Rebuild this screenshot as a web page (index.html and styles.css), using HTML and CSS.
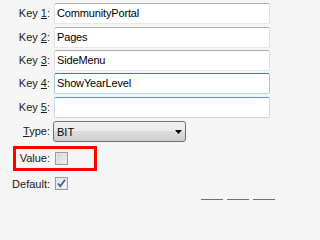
FILE: index.html
```html
<!DOCTYPE html>
<html>
<head>
<meta charset="utf-8">
<link rel="stylesheet" href="styles.css">
</head>
<body>
<div class="page">
<div class="form">
  <label class="lbl">Key <u>1</u>:</label>
  <div class="field">CommunityPortal</div>
  <label class="lbl">Key <u>2</u>:</label>
  <div class="field">Pages</div>
  <label class="lbl">Key <u>3</u>:</label>
  <div class="field">SideMenu</div>
  <label class="lbl">Key <u>4</u>:</label>
  <div class="field focus">ShowYearLevel</div>
  <label class="lbl">Key <u>5</u>:</label>
  <div class="field hover"></div>
  <label class="lbl"><u>T</u>ype:</label>
  <div class="select"><span>BIT</span><svg class="arrow" width="7" height="4" viewBox="0 0 7 4"><path d="M0 0H7L3.5 4Z" fill="#000"/></svg></div>
  <div class="valuerow">
    <div class="highlight">
      <label class="lbl">Value:</label>
      <span class="cb"></span>
    </div>
  </div>
  <label class="lbl deflbl">Default:</label>
  <span class="cb checked"><svg width="11" height="11" viewBox="0 0 11 11"><path d="M2 5.5L4.3 8.2L9 1.8" fill="none" stroke="#4a5b9c" stroke-width="1.8"/></svg></span>
</div>
<div class="buttons">
  <span class="btn"></span><span class="btn"></span><span class="btn"></span>
</div>
</div>
</body>
</html>
```

FILE: styles.css
```css
html, body {
  margin: 0;
  padding: 0;
  background: #f5f5f5;
}
body {
  overflow: hidden;
  font-family: "Liberation Sans", Arial, sans-serif;
  font-size: 11px;
  color: #1a1a1a;
}
.page {
  width: 277px;
  height: 200px;
  overflow: hidden;
}
.form {
  display: grid;
  grid-template-columns: 50px 216px;
  grid-template-rows: 24px 23px 23px 24px 24px 25px 31px 20px;
  column-gap: 4px;
  padding-top: 3px;
}
.lbl {
  text-align: right;
  height: 21px;
  line-height: 21px;
  white-space: nowrap;
}
.field {
  box-sizing: border-box;
  height: 21px;
  line-height: 19px;
  padding-left: 2px;
  background: #fff;
  border: 1px solid #dbdfe6;
  border-top-color: #abadb3;
  border-bottom-color: #e3e9ef;
  border-radius: 2px;
  color: #000;
  letter-spacing: -0.15px;
}
.field.focus {
  border-color: #a4c9e3;
  border-top-color: #3d7bad;
  border-bottom-color: #b7d9ed;
}
.field.hover {
  border-color: #c5daed;
  border-top-color: #5794bf;
}
.select {
  box-sizing: border-box;
  width: 133px;
  margin-left: -1px;
  height: 21px;
  border: 1px solid #707070;
  border-radius: 3px;
  background: linear-gradient(#f2f2f2 0%, #ebebeb 45%, #dddddd 50%, #cfcfcf 100%);
  display: flex;
  align-items: center;
  justify-content: space-between;
  padding: 0 3px 0 3px;
  color: #000;
}
.arrow {
  margin-top: 1px;
}
.valuerow {
  grid-column: 1 / span 2;
}
.highlight {
  box-sizing: border-box;
  margin-left: 13px;
  width: 84px;
  height: 25px;
  border: 3px solid #ff0000;
  display: grid;
  grid-template-columns: 34px 13px;
  column-gap: 5px;
  align-items: center;
}
.highlight .lbl {
  height: auto;
  line-height: 13px;
}
.cb {
  box-sizing: border-box;
  width: 13px;
  height: 13px;
  margin-left: 1px;
  border: 1px solid #9b9b9b;
  background: linear-gradient(135deg, #cfcfcf, #f4f4f4);
  box-shadow: inset 0 0 0 1px #e8e8e8;
  display: flex;
  align-items: center;
  justify-content: center;
}
.highlight .cb {
  margin-left: 0;
}
.cb.checked {
  background: linear-gradient(135deg, #e4e4e4, #f8f8f8);
}
.cb svg {
  display: block;
}
.deflbl {
  height: 13px;
  line-height: 14px;
}
.buttons {
  display: flex;
  justify-content: flex-end;
  gap: 4px;
  padding-right: 2px;
  margin-top: 2px;
}
.btn {
  width: 22px;
  height: 20px;
  border-top: 1px solid #707070;
  background: #f0f0f0;
}
```
